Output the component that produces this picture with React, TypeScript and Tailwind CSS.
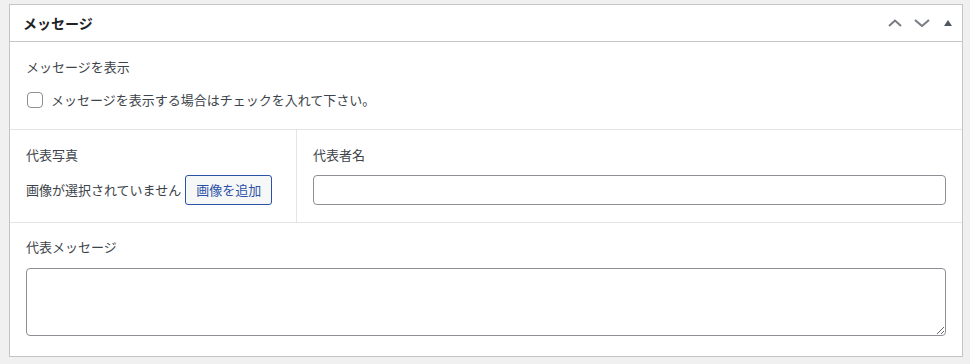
import React from "react";

const font = { fontFamily: '"Noto Sans CJK JP", "Noto Sans", sans-serif' };

export default function App() {
  return (
    <div className="w-[970px] h-[364px] bg-[#f0f0f1] pt-[4px] pl-[9px]" style={font}>
      <div className="w-[954px] border border-[#c3c4c7] bg-white">
        <div className="h-[37px] border-b border-[#c3c4c7] flex items-center pl-[13px] pr-[10px]">
          <h2 className="text-[14px] font-bold text-[#1d2327] leading-none flex-1">メッセージ</h2>
          <div className="flex items-center text-[#787c82]">
            <svg width="14" height="8" viewBox="0 0 14 8" className="mr-[12px]">
              <path d="M1 7 L7 1.5 L13 7" fill="none" stroke="#787c82" strokeWidth="2" />
            </svg>
            <svg width="16" height="8" viewBox="0 0 16 8" className="mr-[14px]">
              <path d="M1 1 L8 7 L15 1" fill="none" stroke="#787c82" strokeWidth="2" />
            </svg>
            <svg width="8" height="6" viewBox="0 0 8 6">
              <path d="M0 6 L4 0 L8 6 Z" fill="#50575e" />
            </svg>
          </div>
        </div>
        <div className="px-4 pt-[15px] pb-[19px] border-b border-[#e2e4e7] text-[13px] text-[#3c434a]">
          <div className="h-[20px] leading-[20px]">メッセージを表示</div>
          <label className="mt-[13px] h-[20px] flex items-center">
            <span className="ml-[1px] w-[16px] h-[16px] border border-[#8c8f94] rounded-[4px] bg-white mr-[8px]" />
            <span className="leading-[20px]">メッセージを表示する場合はチェックを入れて下さい。</span>
          </label>
        </div>
        <div className="flex border-b border-[#e2e4e7] text-[13px] text-[#3c434a]">
          <div className="w-[287px] border-r border-[#e2e4e7] pl-4 pt-[15px] pb-[17px]">
            <div className="h-[20px] leading-[20px]">代表写真</div>
            <div className="mt-[10px] flex items-center">
              <span className="leading-[20px]">画像が選択されていません</span>
              <span className="ml-[4px] h-[30px] w-[87px] border border-[#2c52a8] rounded-[3px] bg-[#f6f7f7] text-[#2c52a8] flex items-center justify-center">
                画像を追加
              </span>
            </div>
          </div>
          <div className="flex-1 px-4 pt-[15px] pb-[17px]">
            <div className="h-[20px] leading-[20px]">代表者名</div>
            <div className="mt-[10px] h-[30px] border border-[#8c8f94] rounded-[4px] bg-white" />
          </div>
        </div>
        <div className="px-4 pt-[14px] pb-[20px] text-[13px] text-[#3c434a]">
          <div className="h-[20px] leading-[20px]">代表メッセージ</div>
          <textarea
            className="mt-[11px] block w-full h-[68px] border border-[#8c8f94] rounded-[4px] bg-white outline-none"
            readOnly
          />
        </div>
      </div>
    </div>
  );
}
